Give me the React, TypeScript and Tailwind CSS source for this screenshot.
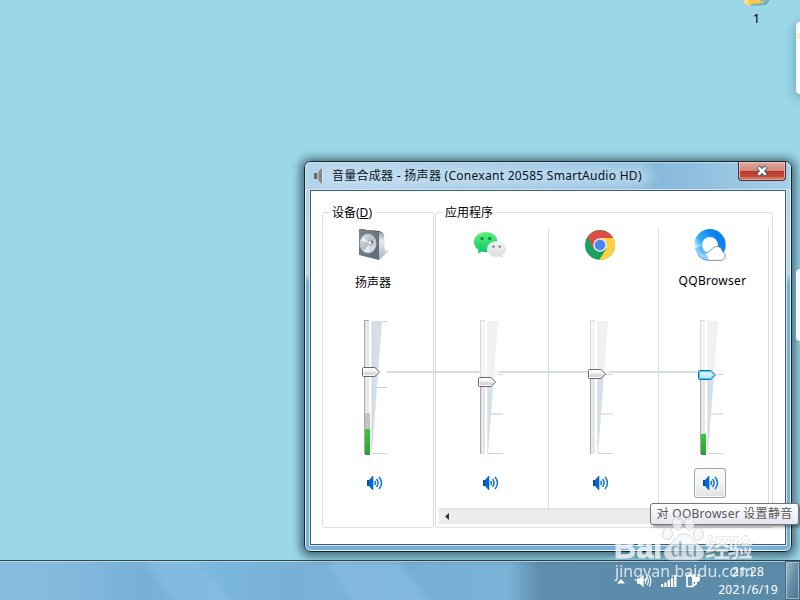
import type { ReactNode } from "react";

const FONT = "font-['Noto_Sans','Noto_Sans_CJK_SC',sans-serif]";

function SpeakerBox() {
  return (
    <svg width="32" height="32" viewBox="0 0 32 32">
      <defs>
        <linearGradient id="boxFront" x1="0" y1="0" x2="1" y2="1">
          <stop offset="0" stopColor="#77858f" />
          <stop offset="1" stopColor="#596975" />
        </linearGradient>
        <linearGradient id="boxSide" x1="0" y1="0" x2="0" y2="1">
          <stop offset="0" stopColor="#8a9298" />
          <stop offset="0.35" stopColor="#e8ebef" />
          <stop offset="1" stopColor="#a3aebb" />
        </linearGradient>
        <linearGradient id="boxCone" x1="0" y1="0" x2="1" y2="1">
          <stop offset="0" stopColor="#dfe4e6" />
          <stop offset="0.5" stopColor="#b7c0c5" />
          <stop offset="1" stopColor="#eff2f3" />
        </linearGradient>
      </defs>
      <path d="M21 31L31 22L26 21Z" fill="#9b9b9b" opacity="0.45" />
      <path d="M21 2L26 5L27 25L21 31Z" fill="url(#boxSide)" />
      <path d="M1 0L21 2V31L1 26Z" fill="url(#boxFront)" />
      <path d="M1 0L21 2L26 4L5 0Z" fill="#53606a" />
      <ellipse cx="10" cy="14.500" rx="8" ry="9.500" fill="url(#boxCone)" stroke="#c4cbcf" strokeWidth="0.800" />
      <path d="M12 14L5 8L3 12ZM12 14L6 22L11 23.500Z" fill="#fff" opacity="0.600" />
      <circle cx="12.500" cy="13.500" r="3" fill="#a7b0b5" />
      <circle cx="12" cy="13.800" r="1.800" fill="#e9edef" />
      <circle cx="14" cy="13" r="1" fill="#4b565e" />
    </svg>
  );
}

function WeChat() {
  return (
    <svg width="32" height="32" viewBox="0 0 32 32">
      <defs>
        <linearGradient id="wxGreen" x1="0" y1="0" x2="0" y2="1">
          <stop offset="0" stopColor="#5df07d" />
          <stop offset="1" stopColor="#07c765" />
        </linearGradient>
        <linearGradient id="wxGray" x1="0" y1="0" x2="0" y2="1">
          <stop offset="0" stopColor="#f1f1f1" />
          <stop offset="1" stopColor="#dcdcdc" />
        </linearGradient>
      </defs>
      <path
        d="M12 3C5.400 3 0 7.300 0 13C0 16.200 1.800 19 4.500 20.900L4 24.500L8 22.500C9.300 22.900 10.600 23 12 23C18.500 23 23.500 18.500 23.500 13C23.500 7.300 18.600 3 12 3Z"
        fill="url(#wxGreen)"
      />
      <path
        d="M22.500 12.300C17.200 12.300 13 15.800 13 20.200C13 24.700 17.300 28 22.500 28C23.600 28 24.700 27.900 25.700 27.600L28.900 29.300L28.200 26.300C30.500 24.900 32 22.700 32 20.200C32 15.800 27.800 12.300 22.500 12.300Z"
        fill="url(#wxGray)"
      />
      <circle cx="8" cy="9.600" r="1.500" fill="#16763b" />
      <circle cx="15.700" cy="9.600" r="1.500" fill="#16763b" />
      <circle cx="19.500" cy="17.600" r="1.200" fill="#7c7c7c" />
      <circle cx="25.700" cy="17.600" r="1.200" fill="#7c7c7c" />
    </svg>
  );
}

function Chrome() {
  return (
    <svg width="32" height="32" viewBox="0 0 32 32">
      <circle cx="16" cy="16" r="15" fill="#1ba15f" />
      <path d="M3.500 8A15 15 0 0 1 29.200 9H16L9.500 19.500Z" fill="#dc4e41" />
      <path d="M16 9H29.300A15 15 0 0 1 15.200 31L22.400 19.500Z" fill="#ffce44" />
      <circle cx="16" cy="16" r="6.800" fill="#f1f1f1" />
      <circle cx="16" cy="16" r="5.400" fill="#4a87f3" />
    </svg>
  );
}

function QQBrowser() {
  return (
    <svg width="32" height="32" viewBox="0 0 32 32">
      <defs>
        <linearGradient id="qqRing" x1="0.100" y1="0.900" x2="0.850" y2="0.300">
          <stop offset="0" stopColor="#e3f7ff" />
          <stop offset="0.350" stopColor="#34b3fb" />
          <stop offset="1" stopColor="#0b80ee" />
        </linearGradient>
      </defs>
      <circle cx="16" cy="15.800" r="11.800" fill="none" stroke="url(#qqRing)" strokeWidth="7.800" />
      <path
        d="M12.500 24C16 23 18.500 17.500 23 17.500C26.300 17.500 28 20 28.200 22.200C32.300 23.500 32.500 31 27 31.400H15C10 31.300 6 29 4 26Z"
        fill="#fff"
      />
      <path d="M1 19C2 26 8 31.400 15 31.400L12 24C9 22.500 8 20 8 17Z" fill="url(#qqRing)" opacity="0.500" />
      <path
        d="M12.500 24C16 23 18.500 17.500 23 17.500C26.300 17.500 28 20 28.200 22.200C32.300 23.500 32.500 31 27 31.400H15C10 31.300 6 29 4 26"
        fill="none"
        stroke="#557eaf"
        strokeWidth="0.800"
      />
    </svg>
  );
}

function SoundIcon() {
  return (
    <svg width="16" height="14" viewBox="0 0 16 14">
      <path d="M0 4H2.500V10H0Z" fill="#0a4fa8" />
      <path d="M2 4L5.500 0H6.300V14H5.500L2 10Z" fill="#0567d2" />
      <path
        d="M7.600 5Q9.200 7 7.600 9M9.500 3Q12.600 7 9.500 11M12 1Q17 7 12 13"
        fill="none"
        stroke="#1674d4"
        strokeWidth="1.500"
      />
    </svg>
  );
}

type SliderProps = {
  thumb: number;
  ticks: number[];
  level?: number;
  peak?: number;
  active?: boolean;
  master?: boolean;
};

// y values are measured from the top of the 140px slider area
function Slider({ thumb, ticks, level, peak, active, master }: SliderProps) {
  const t = thumb;
  return (
    <svg width="32" height="140" viewBox="0 0 32 140" className="relative z-10 block">
      <defs>
        <linearGradient id="meter" x1="0" y1="0" x2="0" y2="1">
          <stop offset="0" stopColor="#34cc34" />
          <stop offset="1" stopColor="#2f9e35" />
        </linearGradient>
        <linearGradient id="thumbGray" x1="0" y1="0" x2="0" y2="1">
          <stop offset="0" stopColor="#fff" />
          <stop offset="0.450" stopColor="#f1f1f1" />
          <stop offset="0.550" stopColor="#dadada" />
          <stop offset="1" stopColor="#d6d6d6" />
        </linearGradient>
        <linearGradient id="thumbBlue" x1="0" y1="0" x2="0" y2="1">
          <stop offset="0" stopColor="#e9faff" />
          <stop offset="0.500" stopColor="#cfefff" />
          <stop offset="1" stopColor="#9ddcf8" />
        </linearGradient>
      </defs>
      <rect x="4" y="2" width="5" height="134" fill="#e6e8e8" />
      <rect x="4" y="2" width="1" height="134" fill="#a9a9a9" />
      <rect x="4" y="2" width="5" height="1" fill="#a9a9a9" />
      {peak && <rect x="5" y={peak} width="5" height={136 - peak} fill="#c3c5c5" />}
      {level && <rect x="5" y={level} width="5" height={137 - level} fill="url(#meter)" />}
      {ticks.map((y, i) => (
        <rect
          key={y}
          x="11"
          y={y}
          width="16"
          height={!master && i === 1 ? 2 : 1}
          fill={!master && i === 1 ? "#e6e6e6" : "#cfd1d3"}
        />
      ))}
      <path d="M11 3H22L12 136H11Z" fill="#d6dfe8" />
      <path d="M11 3V136" stroke="#fff" strokeWidth="0.800" opacity="0.700" />
      {!master && <rect x="3" y="0" width="20" height={t} fill="#fff" opacity="0.580" />}
      <path
        d={`M3.500 ${t - 4.500}H14.800L19.600 ${t}L14.800 ${t + 4.500}H3.500Q2.500 ${t + 4.500} 2.500 ${t + 3.500}V${t - 3.500}Q2.500 ${t - 4.500} 3.500 ${t - 4.500}Z`}
        fill={active ? "url(#thumbBlue)" : "url(#thumbGray)"}
        stroke={active ? "#256d94" : "#68686a"}
      />
      <path
        d={`M3.500 ${t - 3.500}H14.300L18 ${t}L14.300 ${t + 3.500}H3.500Z`}
        fill="none"
        stroke={active ? "#1fd0ff" : "#fff"}
        strokeWidth="0.900"
      />
    </svg>
  );
}

type ColumnProps = SliderProps & {
  icon: ReactNode;
  label?: string;
  labelClass?: string;
  className?: string;
};

function Column({ icon, label, labelClass = "", className = "", ...slider }: ColumnProps) {
  return (
    <div className={`flex h-[280px] w-[110px] flex-col ${className}`}>
      <div className="mt-px ml-[35px] h-8">{icon}</div>
      <div
        className={`mt-3 h-[18px] text-center text-[12px] leading-[18px] whitespace-nowrap ${labelClass}`}
      >
        {label}
      </div>
      <div className="mt-[27px] ml-[37px] h-[140px]">
        <Slider {...slider} />
      </div>
      <div
        className={`mt-[10px] ml-[35px] flex h-[30px] w-8 items-center ${
          slider.active
            ? "rounded-[3px] border border-[#a5a5a5] bg-linear-to-b from-[#fafafa] via-[#f3f3f3] via-50% to-[#e2e2e2] pl-2 shadow-[inset_0_0_0_1px_#fafafa]"
            : "border border-transparent pl-2"
        }`}
      >
        <SoundIcon />
      </div>
    </div>
  );
}

function Legend({ children, className }: { children: ReactNode; className: string }) {
  return (
    <legend className={`h-[18px] px-[3px] text-[12px] leading-[20px] whitespace-nowrap ${className}`}>
      {children}
    </legend>
  );
}

function Mixer() {
  return (
    <div className="absolute top-[161px] left-[304px] flex h-[391px] w-[488px] flex-col rounded-[7px] border border-[#17242e] bg-linear-to-b from-[#b5d5eb] from-0% via-[#b9d6e9] via-29% to-[#79afd4] to-31% shadow-[0_1px_8px_4px_rgba(22,45,56,0.6)] ring-1 ring-inset ring-[#e2f3fc]">
      <div className="relative flex h-7 items-start overflow-hidden rounded-t-[6px] bg-linear-to-r from-[#b4d4ea] via-[#86b9db] via-72% to-[#a7cfe8] pl-[9px] ring-1 ring-inset ring-[#d9eefa]/60">
        <div className="absolute top-1 left-4 h-[21px] w-[330px] rounded-full bg-[#d6eaf6]/60 blur-[7px]" />
        <svg width="11" height="16" viewBox="0 0 11 16" className="relative mt-[6px]">
          <path d="M0 5H3V11H0Z" fill="#646b70" />
          <path d="M3 5L8 0V16L3 11Z" fill="#a4abaf" />
          <path d="M5 3L8 0V16L5 13Z" fill="#80878b" />
          <path d="M8.500 0V16" stroke="#dfe2e4" />
        </svg>
        <div className="relative ml-[7px] text-[12px] leading-[28px] tracking-[0.28px] whitespace-nowrap text-[#08131b]">
          音量合成器 - 扬声器 (Conexant 20585 SmartAudio HD)
        </div>
        <div className="absolute top-0 right-[5px] flex h-[19px] w-[48px] items-center justify-center rounded-b-[4px] border border-t-0 border-[#4c2d32] bg-linear-to-b from-[#dfaca3] from-0% via-[#d2897c] via-45% to-[#cd6d5b] shadow-[inset_0_0_0_1px_rgba(255,220,210,0.5)]">
          <div className="absolute inset-x-px top-[9px] h-[6px] bg-linear-to-b from-[#b8372a] to-[#c54c39]" />
          <svg width="14" height="12" viewBox="0 0 14 12" className="relative">
            <path d="M3 1.800L11 10.200M11 1.800L3 10.200" stroke="#555f70" strokeWidth="4.600" />
            <path d="M3.400 2.300L10.600 9.700M10.600 2.300L3.400 9.700" stroke="#fff" strokeWidth="2.500" />
          </svg>
        </div>
      </div>
      <div className="relative mx-[5px] flex h-[355px] border border-[#3f5c70] bg-white pt-[12px] pl-[11px] text-black outline outline-[#cbe6f5]">
        <fieldset className="h-[325px] w-[112px] rounded-[3px] border border-[#d5dfe5]">
          <Legend className="ml-[6px]">
            设备(<span className="underline">D</span>)
          </Legend>
          <Column
            icon={<SpeakerBox />}
            label="扬声器"
            labelClass="relative -left-1 top-px"
            className="mt-[7px] -ml-0.5 pl-0.5"
            thumb={54}
            ticks={[3, 69, 135]}
            level={111}
            peak={95}
            master
          />
        </fieldset>
        <fieldset className="ml-px h-[325px] w-[338px] rounded-[3px] border border-[#d5dfe5] pl-[3px]">
          <Legend className="ml-[3px]">应用程序</Legend>
          <div className="mt-[7px] flex">
            <Column icon={<WeChat />} className="border-r border-[#d5dfe8]" thumb={64} ticks={[56, 95, 135]} />
            <Column icon={<Chrome />} className="border-r border-[#d5dfe8]" thumb={56} ticks={[56, 95, 135]} />
            <Column
              icon={<QQBrowser />}
              label="QQBrowser"
              labelClass="relative -left-px -top-px tracking-[0.3px]"
              className="border-r border-[#d5dfe8]"
              thumb={57}
              ticks={[56, 95, 135]}
              level={116}
              active
            />
          </div>
          <div className="flex h-4 w-[329px] items-center bg-linear-to-b from-[#e3e3e3] via-[#eeeeee] via-30% to-[#ebebeb] pl-[6px]">
            <svg width="4" height="7" viewBox="0 0 4 7">
              <path d="M4 0V7L0 3.500Z" fill="#333" />
            </svg>
          </div>
        </fieldset>
        <div className="absolute top-[180px] left-[76px] h-[2px] w-[310px] bg-[#d4dee7]" />
      </div>
    </div>
  );
}

function Taskbar() {
  return (
    <div className="absolute inset-x-0 bottom-0 flex h-10 justify-end border-t border-[#2f4655] bg-[#7bb3d8]">
      <svg width="800" height="39" viewBox="0 0 800 39" preserveAspectRatio="none" className="absolute inset-0">
        <defs>
          <linearGradient id="barBase">
            <stop offset="0" stopColor="#87bbdf" />
            <stop offset="0.080" stopColor="#85badf" />
            <stop offset="0.180" stopColor="#77b0d5" />
            <stop offset="0.270" stopColor="#7bb7dd" />
            <stop offset="0.370" stopColor="#79b0d5" />
            <stop offset="0.420" stopColor="#7bb3d8" />
            <stop offset="0.500" stopColor="#76afd4" />
            <stop offset="0.635" stopColor="#7bb3d8" />
            <stop offset="0.675" stopColor="#5f8dab" />
            <stop offset="1" stopColor="#598ba8" />
          </linearGradient>
          <filter id="soft" x="-10%" width="120%">
            <feGaussianBlur stdDeviation="5 0" />
          </filter>
        </defs>
        <rect width="800" height="39" fill="url(#barBase)" />
        <g fill="#88bde2" opacity="0.700" filter="url(#soft)">
          <path d="M145 0H198L230 39H172Z" />
          <path d="M328 0H398L428 39H352Z" />
        </g>
        <rect width="800" height="1" fill="#b7d8e9" />
      </svg>
      <div className="relative flex items-start pr-[18px]">
        <svg width="8" height="5" viewBox="0 0 8 5" className="mt-[18px]">
          <path d="M4 0L8 4.500H0Z" fill="#fff" />
        </svg>
        <svg width="15" height="14" viewBox="0 0 16 14" className="mt-[13px] ml-3">
          <path d="M0 4H3L7 0V14L3 10H0Z" fill="#fff" />
          <path
            d="M8.500 4Q10.500 7 8.500 10M10.800 2.500Q13.500 7 10.800 11.500M13 1Q16.500 7 13 13"
            fill="none"
            stroke="#fff"
            strokeWidth="1.200"
          />
        </svg>
        <svg width="16" height="12" viewBox="0 0 16 12" className="mt-[14px] ml-[9px]">
          <path
            d="M0 9h2.300v3H0zM3.300 7.500h2.300V12H3.300zM6.600 5h2.300v7H6.600zM9.900 3h2.300v9H9.900zM13.200 0h2.300v12h-2.300z"
            fill="#fff"
          />
        </svg>
        <svg width="14" height="15" viewBox="0 0 14 15" className="mt-[12px] ml-[9px]">
          <path d="M1 2.500H7V13.500H1Z" fill="#648fa8" stroke="#fff" strokeWidth="1.600" />
          <path d="M2.500 0.500H5.500V2H2.500Z" fill="#fff" />
          <path d="M6 4H14V7Q13 9 11 9V11Q10 13 7 13V11H9V9Q7 9 6 7Z" fill="#fff" />
          <path d="M8 1V4M12 1V4" stroke="#fff" strokeWidth="1.500" />
        </svg>
      </div>
      <div className="relative w-[60px] pt-[2px] text-center text-[12px] leading-[18px] tracking-[0.3px] whitespace-nowrap text-white">
        <div>21:28</div>
        <div>2021/6/19</div>
      </div>
      <div className="relative ml-[7px] w-[15px] border border-[#45697e] bg-linear-to-br from-[#a4bdcb] via-[#668da5] to-[#467492] shadow-[inset_0_0_0_1px_rgba(190,218,233,0.6)]" />
    </div>
  );
}

function Watermark() {
  return (
    <svg
      width="150"
      height="72"
      viewBox="610 514 150 72"
      className="pointer-events-none absolute top-[514px] left-[610px] z-30 opacity-75"
    >
      <g fill="#f4f6f7" stroke="#b9c4ca" strokeWidth="0.800">
        <ellipse cx="667.500" cy="533.500" rx="4.800" ry="6.200" />
        <ellipse cx="677.500" cy="523" rx="4.800" ry="7" />
        <ellipse cx="689.500" cy="523.500" rx="4.800" ry="6.800" />
        <ellipse cx="698.500" cy="534" rx="4.800" ry="6.200" />
        <path d="M684 534C676 534 675 541 668 546C661 552 664 560 672 560H696C704 560 707 552 700 546C693 541 692 534 684 534Z" />
      </g>
      <g fill="none" fontWeight="700">
        <text
          x="614"
          y="558"
          fontSize="32"
          textLength="48"
          lengthAdjust="spacingAndGlyphs"
          fill="#fff"
          stroke="#fff"
          strokeWidth="1"
          fontFamily="Liberation Sans, sans-serif"
        >
          Bai
        </text>
        <text
          x="670"
          y="557"
          fontSize="22"
          textLength="28"
          fill="#8ba6b4"
          stroke="#fff"
          strokeWidth="0.600"
          fontFamily="Liberation Sans, sans-serif"
        >
          du
        </text>
        <text
          x="705"
          y="557"
          fontSize="25"
          textLength="48"
          fill="#fff"
          stroke="#c3ccd1"
          strokeWidth="0.500"
          fontFamily="Noto Sans CJK SC, sans-serif"
        >
          经验
        </text>
      </g>
      <text x="615" y="577" fontSize="16" textLength="139" fill="#fff" fontFamily="Noto Sans, sans-serif">
        jingyan.baidu.com
      </text>
    </svg>
  );
}

export default function App() {
  return (
    <div className={`relative h-[600px] w-[800px] overflow-hidden bg-[#9ad8e9] ${FONT}`}>
      <div className="absolute top-0 left-[743px] flex w-[27px] flex-col items-center text-[12px] text-black">
        <svg width="27" height="7" viewBox="0 0 27 7">
          <path d="M7 6L23 5L27 0H15Z" fill="#598392" opacity="0.500" />
          <path d="M1 0H22L20 3L8 4V6L1 3Z" fill="#f6c84c" />
          <path d="M1 0H6V6L1 3Z" fill="#ffdf7e" />
          <path d="M17 2L21 1V0H18Z" fill="#7cb4c5" />
        </svg>
        <div className="mt-[2px] text-[13px] leading-[18px]">1</div>
      </div>
      <div className="absolute top-[22px] left-[796px] h-[72px] w-5 rounded-sm bg-[#f9fcfd] shadow-[0_3px_12px_rgba(40,95,115,0.5)]">
        <div className="mt-[11px] h-1.5 w-1 bg-[#fdecd0]" />
      </div>
      <Taskbar />
      <Mixer />
      <div className="absolute top-[269px] left-[796px] h-[72px] w-5 rounded-sm bg-[#f3f9fd]" />
      <div className="absolute top-[503px] left-[650px] z-20 flex h-[22px] w-[149px] items-center justify-center rounded-[3px] border border-[#767676] bg-linear-to-b from-white to-[#e4e5f0] text-[12px] tracking-[0.28px] whitespace-nowrap text-[#575757] shadow-[2px_2px_3px_rgba(0,0,0,0.4)]">
        对 QQBrowser 设置静音
      </div>
      <Watermark />
    </div>
  );
}
